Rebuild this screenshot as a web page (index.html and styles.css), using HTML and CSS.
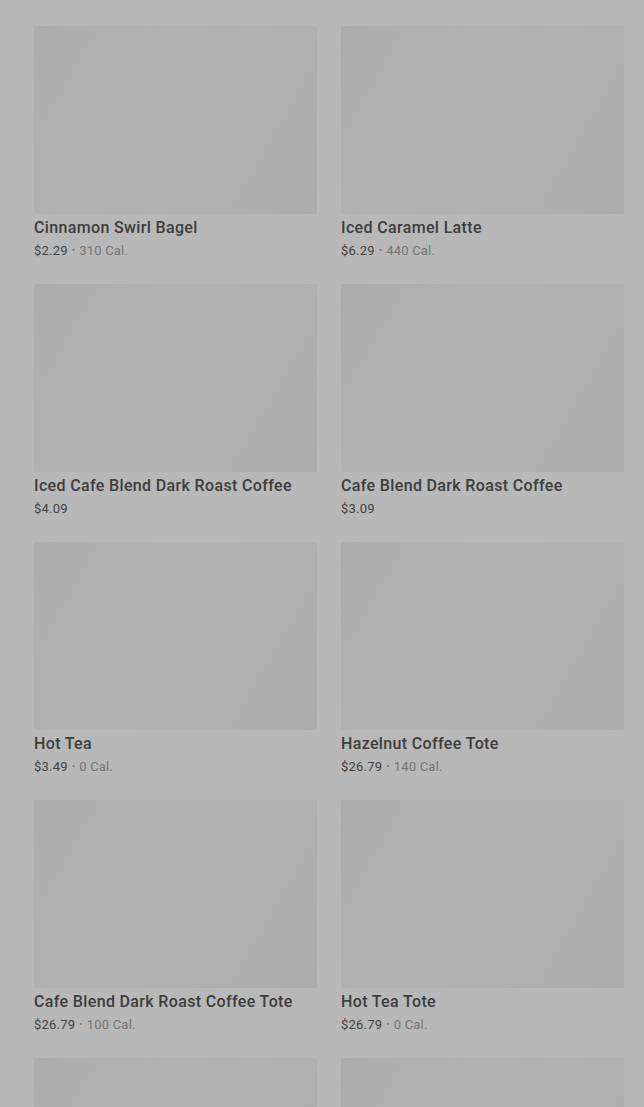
FILE: index.html
```html
<!DOCTYPE html>
<html lang="en">
<head>
<meta charset="utf-8">
<title>Menu</title>
<link rel="stylesheet" href="styles.css">
</head>
<body>
<main class="grid">
  <article class="card"><div class="thumb"></div><h3 class="name">Plain Bagel</h3><p class="meta"><span class="price">$1.99</span></p></article>
  <article class="card"><div class="thumb"></div><h3 class="name">Caramel Latte</h3><p class="meta"><span class="price">$5.49</span><span class="dot">•</span><span class="cal">440 Cal.</span></p></article>

  <article class="card"><div class="thumb"></div><h3 class="name">Cinnamon Swirl Bagel</h3><p class="meta"><span class="price">$2.29</span><span class="dot">•</span><span class="cal">310 Cal.</span></p></article>
  <article class="card"><div class="thumb"></div><h3 class="name">Iced Caramel Latte</h3><p class="meta"><span class="price">$6.29</span><span class="dot">•</span><span class="cal">440 Cal.</span></p></article>

  <article class="card"><div class="thumb"></div><h3 class="name">Iced Cafe Blend Dark Roast Coffee</h3><p class="meta"><span class="price">$4.09</span></p></article>
  <article class="card"><div class="thumb"></div><h3 class="name">Cafe Blend Dark Roast Coffee</h3><p class="meta"><span class="price">$3.09</span></p></article>

  <article class="card"><div class="thumb"></div><h3 class="name">Hot Tea</h3><p class="meta"><span class="price">$3.49</span><span class="dot">•</span><span class="cal">0 Cal.</span></p></article>
  <article class="card"><div class="thumb"></div><h3 class="name">Hazelnut Coffee Tote</h3><p class="meta"><span class="price">$26.79</span><span class="dot">•</span><span class="cal">140 Cal.</span></p></article>

  <article class="card"><div class="thumb"></div><h3 class="name">Cafe Blend Dark Roast Coffee Tote</h3><p class="meta"><span class="price">$26.79</span><span class="dot">•</span><span class="cal">100 Cal.</span></p></article>
  <article class="card"><div class="thumb"></div><h3 class="name">Hot Tea Tote</h3><p class="meta"><span class="price">$26.79</span><span class="dot">•</span><span class="cal">0 Cal.</span></p></article>

  <article class="card"><div class="thumb"></div><h3 class="name">Blueberry Muffin</h3><p class="meta"><span class="price">$2.99</span></p></article>
  <article class="card"><div class="thumb"></div><h3 class="name">Vanilla Latte</h3><p class="meta"><span class="price">$5.49</span></p></article>
</main>
</body>
</html>
```

FILE: styles.css
```css
html, body {
  margin: 0;
  padding: 0;
  background: #b8b8b8;
  height: 100%;
  overflow: hidden;
}

body {
  font-family: Roboto, "Liberation Sans", Arial, sans-serif;
  color: #3c3c3c;
}

.grid {
  display: grid;
  grid-template-columns: 283px 283px;
  column-gap: 24px;
  row-gap: 24px;
  padding-left: 34px;
  margin-top: -232px;
}

.card {
  display: flex;
  flex-direction: column;
  margin: 0;
}

.thumb {
  height: 188px;
  border-radius: 2px;
  background: linear-gradient(120deg, #acacac 0%, #b2b2b2 35%, #b1b1b1 60%, #acacac 100%);
}

.name {
  margin: 4px 0 0;
  font-size: 16px;
  font-weight: 500;
  line-height: 20px;
  color: #3d3d3d;
  letter-spacing: 0.35px;
}

.meta {
  margin: 4px 0 0;
  font-size: 13px;
  line-height: 18px;
  display: flex;
  align-items: center;
  gap: 4px;
  letter-spacing: 0.2px;
}

.price {
  color: #424242;
}

.dot {
  color: #7a7a7a;
  font-size: 10px;
}

.cal {
  color: #747474;
}
```
